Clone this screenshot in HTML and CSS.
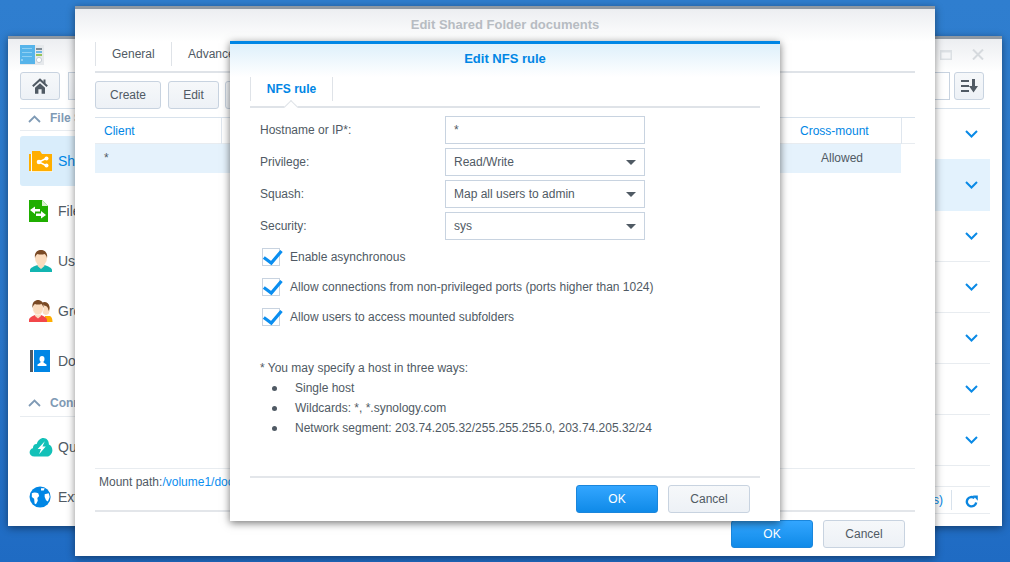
FILE: index.html
```html
<!DOCTYPE html>
<html lang="en">
<head>
<meta charset="utf-8">
<title>Edit NFS rule</title>
<link rel="stylesheet" href="styles.css">
</head>
<body>
<div class="desktop">

  <section class="window back">
    <header class="back-head">
      <svg class="logo" width="24" height="20" viewBox="0 0 24 20">
        <rect width="24" height="20" fill="#e6e9ec"/>
        <rect width="15" height="19" fill="#56b4ea"/>
        <rect x="2" y="3" width="10" height="1" fill="#8fd0f3"/>
        <rect x="2" y="7" width="10" height="1" fill="#8fd0f3"/>
        <rect x="2" y="11" width="10" height="1" fill="#8fd0f3"/>
        <rect x="1" y="14" width="2" height="2" fill="#8fd0f3"/>
        <rect x="16" y="3" width="6" height="2" fill="#7f8c96"/>
        <rect x="16" y="6" width="6" height="2" fill="#6fb7e5"/>
        <rect x="16" y="9" width="6" height="2" fill="#97c45a"/>
        <circle cx="19" cy="15" r="2.6" fill="#fff" stroke="#c5cdd4"/>
      </svg>
      <div class="win-controls">
        <svg width="12" height="10" viewBox="0 0 12 10"><rect width="12" height="10" fill="#dce0e4"/><rect x="1.5" y="2.5" width="9" height="6" fill="#f4f5f7"/></svg>
        <svg width="12" height="11" viewBox="0 0 12 11"><path d="M1 .5l10 10M11 .5l-10 10" stroke="#d6dade" stroke-width="2"/></svg>
      </div>
    </header>
    <div class="back-toolbar">
      <button class="btn icon-btn home">
        <svg width="16" height="16" viewBox="0 0 16 16"><path fill="none" stroke="#505a64" stroke-width="2" d="M.8 8.300L8 1.700l7.200 6.600"/><path fill="#505a64" d="M11.500 1.500h2v4h-2zM8 5.200l5 4.500v6H9.600v-4.500H6.400v4.500H3v-6z"/></svg>
      </button>
      <button class="btn seg"></button>
      <span class="grow"></span>
      <span class="search"></span>
      <button class="btn icon-btn sort">
        <svg width="17" height="14" viewBox="0 0 17 14"><path fill="#505a64" d="M0 1h8v2H0zM0 6h8v2H0zM0 11h8v2H0zM11 0h3v7h3l-4.500 6.500L8 7h3z"/></svg>
      </button>
    </div>
    <div class="back-body">
      <nav class="sidebar">
        <div class="side-head first"><svg class="caret" width="13" height="8" viewBox="0 0 13 8"><path d="M1 7l5.500-5.500L12 7" fill="none" stroke="#7f9ab5" stroke-width="1.800"/></svg><span>File Sharing</span></div>
        <div class="side-item active">
          <svg width="24" height="21" viewBox="0 0 24 21"><path fill="#ffae00" d="M0 3h2v17h-2zM3 0h8l2 3h10v18H3z"/><path fill="none" stroke="#fff" stroke-width=".8" d="M2.500 3v17.500H23.500"/><path d="M17 7.500L10 11l7 3.500" fill="none" stroke="#fff" stroke-width="1.500"/><circle cx="10" cy="11" r="2.300" fill="#fff"/><circle cx="17.500" cy="7.500" r="2" fill="#fff"/><circle cx="17.500" cy="14.500" r="2" fill="#fff"/></svg>
          <span>Shared Folder</span>
        </div>
        <div class="side-item">
          <svg width="24" height="22" viewBox="3 0 24 22"><path fill="#1fae00" d="M2 0h14l6 6v16H2z"/><path fill="#d8f2cf" d="M16 0l6 6h-6z"/><path fill="#fff" d="M4 10l5-3.500V9h5v2.500H9V14zM20 15l-5 3.500V16h-5v-2.500h5V11z"/></svg>
          <span>File Services</span>
        </div>
        <div class="side-item">
          <svg width="24" height="22" viewBox="0 0 24 22"><path fill="#13b5b1" d="M1 22v-2c0-2.500 4-3.500 7.500-5h7c3.500 1.500 7.500 2.500 7.500 5v2z"/><path fill="#fbdcbe" d="M8.500 12h7v4l-3.500 3-3.500-3z"/><ellipse cx="12" cy="8" rx="6" ry="7.500" fill="#fbdcbe"/><path fill="#7a4a25" d="M6 8C5 2 9 0 12 0s7 2 6 8c-.5-2-1.500-3.500-2.500-4-2 .8-5 .8-7 0C7.500 4.500 6.500 6 6 8z"/></svg>
          <span>User</span>
        </div>
        <div class="side-item">
          <svg width="24" height="22" viewBox="0 0 24 22"><path fill="#ffae00" d="M16 16h5c1.500 1 2.500 2.500 2.500 6H16z"/><ellipse cx="17" cy="9" rx="4" ry="6" fill="#fbdcbe"/><path fill="#7a4a25" d="M13 3c2-2 7-1 7.500 4 .2 2-.5 3-1 4-.2-3-1-4-2.500-5-1.500 0-3-1-4-3z"/><path fill="#f2474a" d="M0 22v-2c0-2.500 3-3.500 6-5h6c3 1.500 6 2.500 6 5v2z"/><path fill="#fbdcbe" d="M6 12h6v4l-3 2.500L6 16z"/><ellipse cx="9" cy="8" rx="5.500" ry="7" fill="#fbdcbe" stroke="#fff" stroke-width=".6"/><path fill="#7a4a25" d="M3.500 8C2.500 2 6.500 0 9 0s6.500 2 5.500 8c-.5-2-1.500-3.500-2-4-2 .8-5 .8-6.500 0-1 .5-2 2-2.500 4z"/></svg>
          <span>Group</span>
        </div>
        <div class="side-item">
          <svg width="24" height="22" viewBox="0 0 24 22"><rect x="1" width="3" height="22" fill="#505a64"/><rect x="5" width="16" height="22" fill="#0086e5"/><ellipse cx="13" cy="9" rx="2.500" ry="3" fill="#fff"/><path fill="#fff" d="M11.500 11.500h3v1L17.500 14.500V16h-9v-1.500l3-2z"/></svg>
          <span>Domain/LDAP</span>
        </div>
        <div class="side-head"><svg class="caret" width="13" height="8" viewBox="0 0 13 8"><path d="M1 7l5.500-5.500L12 7" fill="none" stroke="#7f9ab5" stroke-width="1.800"/></svg><span>Connectivity</span></div>
        <div class="side-item">
          <svg width="24" height="19" viewBox="0 0 24 20"><path fill="#13c1b8" d="M5 19.500C2 19.500 0 17.500 0 15c0-2.500 2-4 3.500-4.200C3.500 7.500 5.500 6 7.500 6.300 8.500 2.500 11.500 0 14.500 0c3.500 0 6 3 5.800 6.800 2 .8 3.700 3 3.700 6 0 3.800-3 6.700-6 6.700z"/><path fill="#fff" d="M16 3.500L8.500 11.500h3.500L10 17l7-8h-3.500z"/></svg>
          <span>QuickConnect</span>
        </div>
        <div class="side-item">
          <svg width="24" height="22" viewBox="1 0 24 24"><circle cx="12" cy="12" r="11.500" fill="#0086e5"/><path fill="#fff" d="M3 8C5 6.500 8 7 10 8l1 3-2 2 .5 3-2 4-1.500-1-.5-5L3 12zM13 2.500h4l-1 2.500h-3zM17 9l4.500-1 1 4-2 5-2-1.500L17 12z"/></svg>
          <span>External Access</span>
        </div>
      </nav>
      <div class="back-main">
        <div class="rows">
          <div class="row top"><svg class="chev" width="13" height="8" viewBox="0 0 13 8"><path d="M1 1l5.500 5.500L12 1" fill="none" stroke="#0a8ae6" stroke-width="2"/></svg></div>
          <div class="row selected"><svg class="chev" width="13" height="8" viewBox="0 0 13 8"><path d="M1 1l5.500 5.500L12 1" fill="none" stroke="#0a8ae6" stroke-width="2"/></svg></div>
          <div class="row"><svg class="chev" width="13" height="8" viewBox="0 0 13 8"><path d="M1 1l5.500 5.500L12 1" fill="none" stroke="#0a8ae6" stroke-width="2"/></svg></div>
          <div class="row"><svg class="chev" width="13" height="8" viewBox="0 0 13 8"><path d="M1 1l5.500 5.500L12 1" fill="none" stroke="#0a8ae6" stroke-width="2"/></svg></div>
          <div class="row"><svg class="chev" width="13" height="8" viewBox="0 0 13 8"><path d="M1 1l5.500 5.500L12 1" fill="none" stroke="#0a8ae6" stroke-width="2"/></svg></div>
          <div class="row"><svg class="chev" width="13" height="8" viewBox="0 0 13 8"><path d="M1 1l5.500 5.500L12 1" fill="none" stroke="#0a8ae6" stroke-width="2"/></svg></div>
          <div class="row"><svg class="chev" width="13" height="8" viewBox="0 0 13 8"><path d="M1 1l5.500 5.500L12 1" fill="none" stroke="#0a8ae6" stroke-width="2"/></svg></div>
        </div>
        <div class="status">
          <span class="status-count">7 item(s)</span>
          <span class="status-refresh">
            <svg width="13" height="13" viewBox="0 0 13 13"><path d="M11.200 7.500A4.700 4.700 0 1 1 9.500 3" fill="none" stroke="#0a86e0" stroke-width="2.400"/><path fill="#0a86e0" d="M8 0.500h4.800V5.800z"/></svg>
          </span>
        </div>
      </div>
    </div>
  </section>

  <section class="window middle">
    <header class="win-title muted">Edit Shared Folder documents</header>
    <div class="mid-body">
      <div class="tabs">
        <span class="tab">General</span>
        <span class="tab">Advanced</span>
        <span class="tab">Permissions</span>
      </div>
      <div class="mid-tools">
        <button class="btn tool create">Create</button>
        <button class="btn tool edit">Edit</button>
        <button class="btn tool">Delete</button>
      </div>
      <div class="grid-head">
        <span class="col-client">Client</span>
        <span class="col-fill"></span>
        <span class="col-cross">Cross-mount</span>
      </div>
      <div class="grid-row">
        <span class="col-client">*</span>
        <span class="col-fill"></span>
        <span class="col-cross">Allowed</span>
      </div>
      <div class="grid-space"></div>
      <div class="mount">Mount path:<a class="link">/volume1/documents</a></div>
    </div>
    <footer class="mid-foot">
      <button class="btn primary">OK</button>
      <button class="btn plain">Cancel</button>
    </footer>
  </section>

  <section class="window dialog">
    <header class="win-title accent">Edit NFS rule</header>
    <div class="dlg-tabs"><span class="dlg-tab">NFS rule</span></div>
    <form class="form">
      <div class="field"><label>Hostname or IP*:</label><span class="ctl">*</span></div>
      <div class="field"><label>Privilege:</label><span class="ctl sel">Read/Write</span></div>
      <div class="field"><label>Squash:</label><span class="ctl sel">Map all users to admin</span></div>
      <div class="field"><label>Security:</label><span class="ctl sel">sys</span></div>
      <div class="checks">
        <div class="check"><span class="box"><svg width="21" height="20" viewBox="0 0 21 20"><path d="M1.800 11.500l7.500 5.500 10.200-12" fill="none" stroke="#0a8ef0" stroke-width="3.200"/></svg></span>Enable asynchronous</div>
        <div class="check"><span class="box"><svg width="21" height="20" viewBox="0 0 21 20"><path d="M1.800 11.500l7.500 5.500 10.200-12" fill="none" stroke="#0a8ef0" stroke-width="3.200"/></svg></span>Allow connections from non-privileged ports (ports higher than 1024)</div>
        <div class="check"><span class="box"><svg width="21" height="20" viewBox="0 0 21 20"><path d="M1.800 11.500l7.500 5.500 10.200-12" fill="none" stroke="#0a8ef0" stroke-width="3.200"/></svg></span>Allow users to access mounted subfolders</div>
      </div>
      <div class="note">
        <p>* You may specify a host in three ways:</p>
        <ul>
          <li>Single host</li>
          <li>Wildcards: *, *.synology.com</li>
          <li>Network segment: 203.74.205.32/255.255.255.0, 203.74.205.32/24</li>
        </ul>
      </div>
    </form>
    <footer class="dlg-foot">
      <button class="btn primary" type="button">OK</button>
      <button class="btn plain" type="button">Cancel</button>
    </footer>
  </section>

</div>
</body>
</html>
```

FILE: styles.css
```css
* { box-sizing: border-box; }
html, body { margin: 0; height: 100%; }
body {
  font-family: "Liberation Sans", Arial, sans-serif;
  font-size: 12px;
  color: #505a64;
  overflow: hidden;
}
.desktop {
  position: relative;
  width: 1010px;
  height: 562px;
  overflow: hidden;
  background: linear-gradient(180deg, #2f7ecf 0%, #2a77cb 60%, #1f6bc3 100%);
}
.window {
  position: absolute;
  background: #fff;
  display: flex;
  flex-direction: column;
}
.btn {
  font: inherit;
  color: #505a64;
  height: 28px;
  padding: 0;
  border: 1px solid #c8d3e0;
  border-radius: 3px;
  background: linear-gradient(180deg, #f6f8fa, #edf1f6);
}
.btn.primary {
  width: 82px;
  color: #fff;
  border-color: #1a86dc;
  background: linear-gradient(180deg, #33a6ff, #0f8ae8);
}
.btn.plain { width: 82px; }

/* back window */
.back {
  left: 8px; top: 36px; width: 994px; height: 490px;
  border-top: 3px solid #8f99a3;
  box-shadow: 0 2px 8px rgba(0, 0, 0, .45);
  padding: 0 12px;
}
.back-head {
  margin: 0 -12px;
  padding: 6px 18px 0 12px;
  height: 33px;
  flex: none;
  display: flex;
  justify-content: space-between;
  align-items: flex-start;
  background: linear-gradient(180deg, #eceef1, #fff);
}
.win-controls { display: flex; align-items: center; gap: 20px; padding-top: 4px; }
.back-toolbar {
  flex: none;
  height: 37px;
  padding-bottom: 9px;
  display: flex;
  gap: 8px;
  border-bottom: 1px solid #d8e2ec;
}
.icon-btn { display: flex; align-items: center; justify-content: center; }
.home { width: 40px; }
.seg { width: 60px; border-radius: 0; }
.grow { flex: 1; }
.search { width: 200px; height: 28px; border: 1px solid #c8d3e0; margin-right: -4px; background: #fff; }
.sort { width: 30px; margin-right: 6px; }
.back-body { flex: 1; display: flex; min-height: 0; }
.sidebar { width: 200px; flex: none; }
.side-head {
  height: 31px;
  margin-bottom: 5px;
  display: flex;
  align-items: center;
  gap: 9px;
  padding: 4px 0 0 8px;
  font-weight: bold;
  color: #7f9ab5;
  border-bottom: 1px solid #e8ecf0;
}
.side-head.first { height: 22px; align-items: flex-start; padding-top: 2px; }
.side-head.first .caret { margin-top: 4px; }
.side-item {
  height: 50px;
  display: flex;
  align-items: center;
  font-size: 14px;
  padding-left: 9px;
  border-radius: 3px;
}
.side-item svg { width: 24px; flex: none; margin-right: 5px; }
.side-item.active { background: #d9edfb; color: #0086e5; }
.back-main { flex: 1; display: flex; flex-direction: column; min-width: 0; }
.rows { flex: none; }
.row {
  height: 51px;
  display: flex;
  align-items: center;
  justify-content: flex-end;
  padding-right: 12px;
  border-bottom: 1px solid #e8ecf0;
}
.row.top { height: 50px; border-bottom: 0; }
.row.selected { height: 52px; background: #e3f2fd; border-bottom: 0; }
.chev { flex: none; }
.status {
  height: 28px;
  margin-top: 20px;
  display: flex;
  align-items: center;
  justify-content: flex-end;
  border-top: 1px solid #e8ecf0;
  border-bottom: 1px solid #e8ecf0;
}
.status-count { color: #0086e5; padding-right: 8px; border-right: 1px solid #d8e2ec; line-height: 20px; margin-right: 13px; }
.status-refresh { display: flex; margin: 2px 12px 0 0; }

/* middle window */
.middle {
  left: 75px; top: 6px; width: 860px; height: 550px;
  border-top: 3px solid #8f99a3;
  box-shadow: 0 2px 8px rgba(0, 0, 0, .45);
}
.win-title {
  flex: none;
  text-align: center;
  font-size: 13px;
  font-weight: bold;
}
.muted {
  height: 33px;
  line-height: 31px;
  color: #b7bcc2;
  background: linear-gradient(180deg, #eceef1, #fff);
}
.mid-body { flex: 1; padding: 0 20px; display: flex; flex-direction: column; min-height: 0; }
.tabs {
  flex: none;
  height: 31px;
  display: flex;
  border-bottom: 2px solid #dfe3e8;
  padding-bottom: 5px;
}
.tab { padding: 0 16px; line-height: 24px; height: 24px; border-left: 1px solid #dfe3e8; width: 76px; white-space: nowrap; }
.tab + .tab { padding-left: 16px; width: 120px; }
.mid-tools { flex: none; display: flex; gap: 7px; padding-top: 8px; height: 44px; }
.tool { width: 66px; flex: none; }
.tool.edit { width: 51px; margin-right: -1px; }
.grid-head {
  flex: none;
  height: 27px;
  display: flex;
  align-items: center;
  color: #0086e5;
  border-top: 1px solid #d8e2ec;
  border-bottom: 1px solid #e8ecf0;
}
.grid-row {
  flex: none;
  width: 806px;
  height: 29px;
  display: flex;
  background: #e5f2fc;
  padding-top: 7px;
}
.col-client { width: 127px; padding-left: 9px; flex: none; }
.grid-head .col-client { border-right: 1px solid #dfe6ee; line-height: 26px; }
.col-fill { flex: 1; }
.col-cross { width: 101px; flex: none; text-align: center; padding-right: 17px; }
.grid-head .col-cross {
  width: 112px;
  margin-right: 13px;
  padding: 0 0 0 10px;
  text-align: left;
  border-right: 1px solid #dfe6ee;
  line-height: 26px;
  white-space: nowrap;
}
.grid-space { flex: 1; }
.mount { flex: none; height: 44px; padding: 6px 4px 0; border-top: 1px solid #e8ecf0; line-height: 14px; border-bottom: 2px solid #e3e6ea; }
.link { color: #0a8ef0; }
.mid-foot {
  flex: none;
  height: 44px;
  padding: 8px 30px 0 0;
  display: flex;
  justify-content: flex-end;
  gap: 10px;
}

/* dialog */
.dialog {
  left: 230px; top: 41px; width: 550px; height: 480px;
  border-top: 3px solid #0086e5;
  box-shadow: 0 2px 8px rgba(0, 0, 0, .55);
  padding: 0 20px;
}
.accent {
  margin: 0 -20px;
  height: 33px;
  line-height: 29px;
  color: #0086e5;
  background: linear-gradient(180deg, #def0fb, #fff);
}
.dlg-tabs {
  flex: none;
  height: 31px;
  position: relative;
  display: flex;
  border-bottom: 2px solid #dfe3e8;
  padding-bottom: 6px;
}
.dlg-tabs::after {
  content: "";
  position: absolute;
  left: 36px; bottom: -2px;
  width: 9px; height: 9px;
  background: #fff;
  border-left: 1px solid #dfe3e8;
  border-top: 1px solid #dfe3e8;
  transform: translateY(4px) rotate(45deg);
}
.dlg-tab {
  width: 83px;
  height: 24px;
  line-height: 24px;
  text-align: center;
  font-weight: bold;
  color: #0086e5;
  border-left: 1px solid #dfe3e8;
  border-right: 1px solid #dfe3e8;
}
.form { flex: 1; padding-top: 8px; display: flex; flex-direction: column; min-height: 0; }
.field { flex: none; display: flex; align-items: center; height: 28px; margin-bottom: 4px; padding-left: 10px; }
.field label { width: 185px; flex: none; }
.ctl {
  width: 200px;
  height: 28px;
  line-height: 26px;
  padding-left: 8px;
  border: 1px solid #c8d3e0;
  position: relative;
}
.sel::after {
  content: "";
  position: absolute;
  right: 8px; top: 11px;
  border-left: 5.500px solid transparent;
  border-right: 5.500px solid transparent;
  border-top: 5.500px solid #505a64;
}
.checks { padding: 4px 0 0 12px; display: flex; flex-direction: column; gap: 12px; }
.check { height: 18px; display: flex; align-items: center; gap: 10px; white-space: nowrap; }
.box {
  width: 18px; height: 18px;
  flex: none;
  position: relative;
  border: 1px solid #c8d3e0;
  background: #fff;
}
.box svg { position: absolute; left: -1px; top: -3px; }
.note { padding: 32px 0 0 10px; }
.note p { margin: 0; line-height: 20px; }
.note ul { margin: 0; padding: 0 0 0 12px; list-style: none; }
.note li { line-height: 20px; display: flex; align-items: center; white-space: nowrap; }
.note li::before {
  content: "";
  width: 5px; height: 5px;
  margin-right: 18px;
  flex: none;
  border-radius: 50%;
  background: #505a64;
}
.dlg-foot {
  flex: none;
  height: 45px;
  border-top: 2px solid #e3e6ea;
  padding: 7px 10px 0 0;
  display: flex;
  justify-content: flex-end;
  gap: 10px;
}
```
